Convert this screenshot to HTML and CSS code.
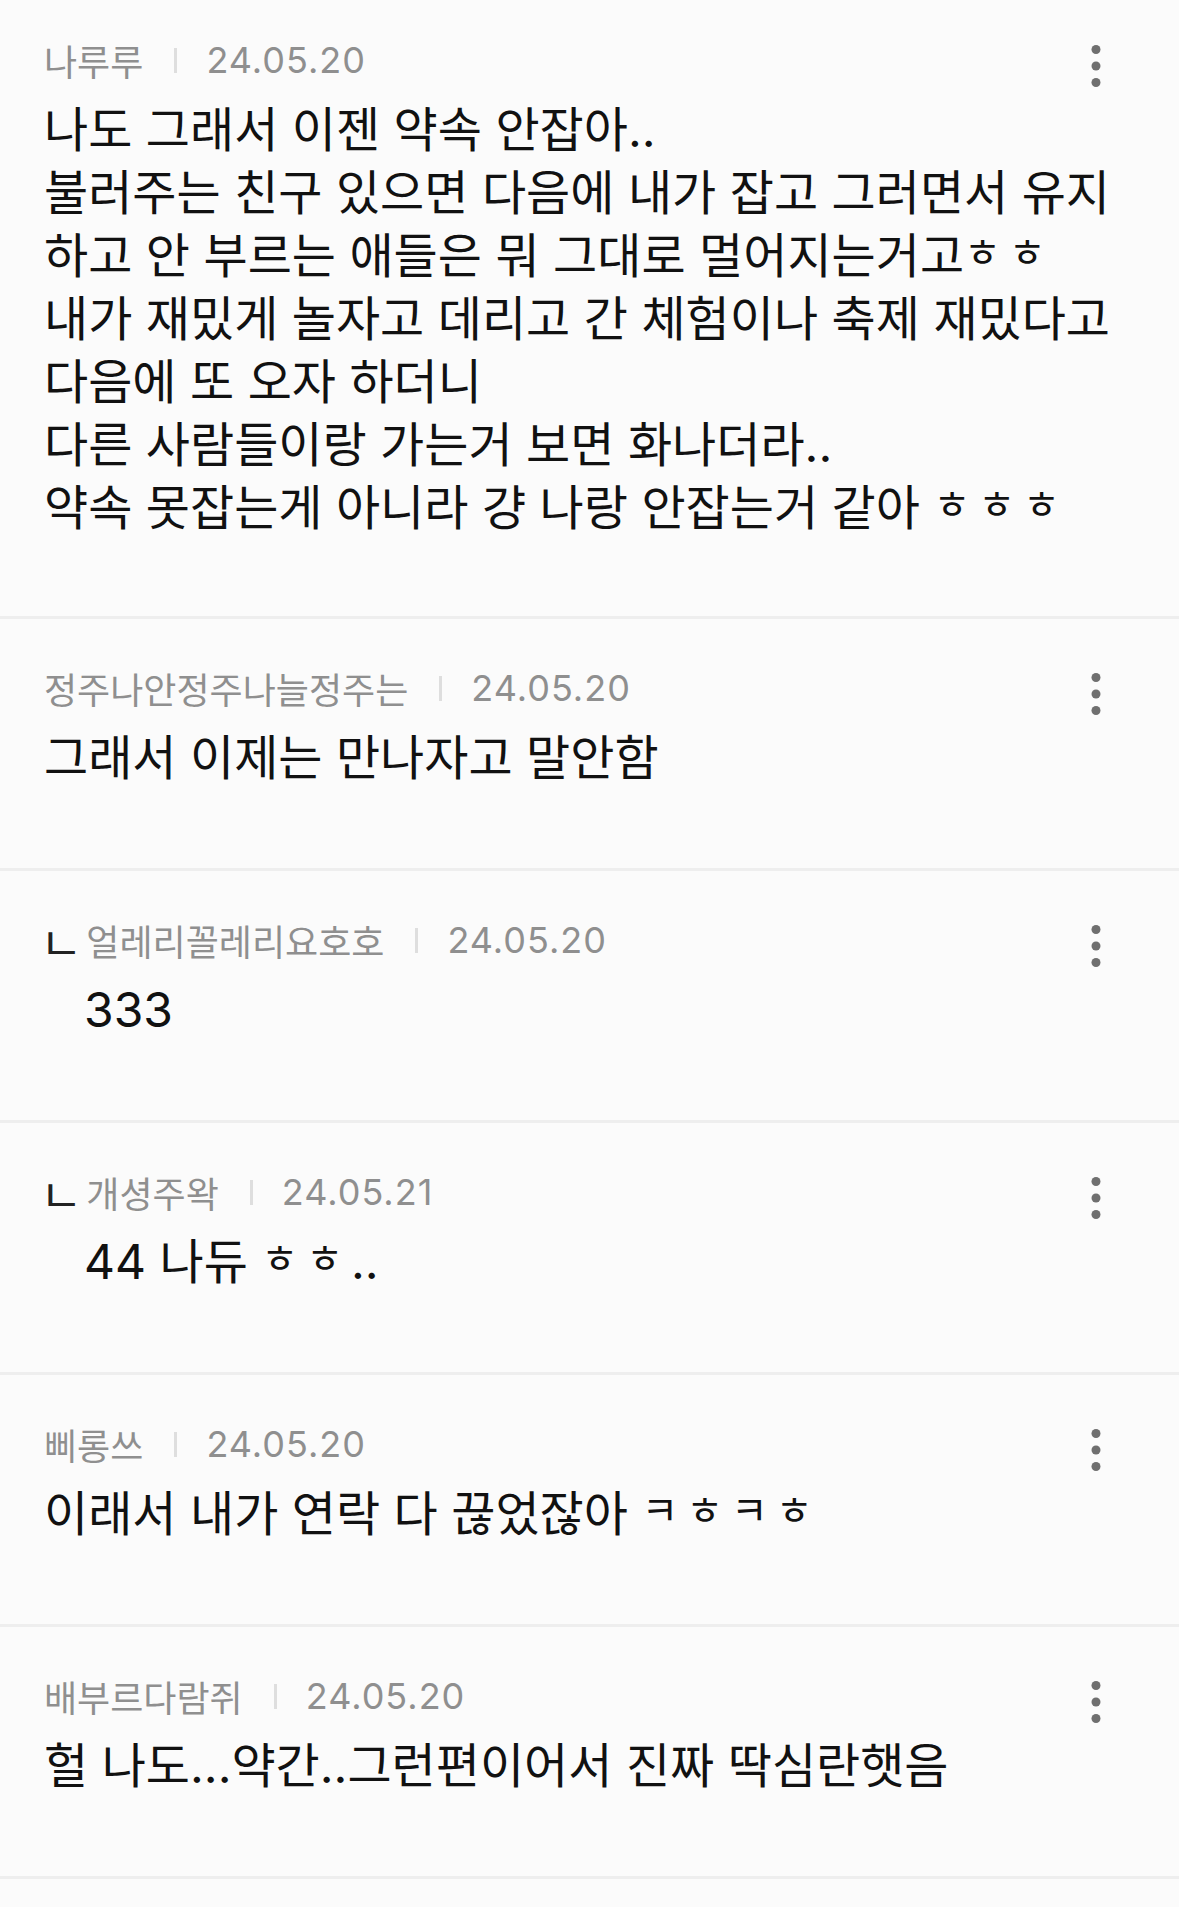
FILE: index.html
```html
<!DOCTYPE html>
<html lang="ko">
<head>
<meta charset="utf-8">
<title>댓글</title>
<link rel="stylesheet" href="styles.css">
</head>
<body>
<div class="list">
  <article class="comment first">
    <div class="meta">
      <span class="name">나루루</span><span class="bar"></span><span class="date">24.05.20</span>
      <svg class="more" viewBox="0 0 10 42" width="10" height="42"><circle cx="5" cy="4.5" r="4.5"/><circle cx="5" cy="21" r="4.5"/><circle cx="5" cy="37.5" r="4.5"/></svg>
    </div>
    <p class="body">나도 그래서 이젠 약속 안잡아..<br>불러주는 친구 있으면 다음에 내가 잡고 그러면서 유지<br>하고 안 부르는 애들은 뭐 그대로 멀어지는거고<span class="jamo">ㅎㅎ</span><br>내가 재밌게 놀자고 데리고 간 체험이나 축제 재밌다고<br>다음에 또 오자 하더니<br>다른 사람들이랑 가는거 보면 화나더라..<br>약속 못잡는게 아니라 걍 나랑 안잡는거 같아 <span class="jamo">ㅎㅎㅎ</span></p>
  </article>
  <article class="comment">
    <div class="meta">
      <span class="name">정주나안정주나늘정주는</span><span class="bar"></span><span class="date">24.05.20</span>
      <svg class="more" viewBox="0 0 10 42" width="10" height="42"><circle cx="5" cy="4.5" r="4.5"/><circle cx="5" cy="21" r="4.5"/><circle cx="5" cy="37.5" r="4.5"/></svg>
    </div>
    <p class="body">그래서 이제는 만나자고 말안함</p>
  </article>
  <article class="comment reply">
    <div class="meta">
      <span class="reply-mark">ㄴ</span><span class="name">얼레리꼴레리요호호</span><span class="bar"></span><span class="date">24.05.20</span>
      <svg class="more" viewBox="0 0 10 42" width="10" height="42"><circle cx="5" cy="4.5" r="4.5"/><circle cx="5" cy="21" r="4.5"/><circle cx="5" cy="37.5" r="4.5"/></svg>
    </div>
    <p class="body">333</p>
  </article>
  <article class="comment reply">
    <div class="meta">
      <span class="reply-mark">ㄴ</span><span class="name">개셩주왁</span><span class="bar"></span><span class="date">24.05.21</span>
      <svg class="more" viewBox="0 0 10 42" width="10" height="42"><circle cx="5" cy="4.5" r="4.5"/><circle cx="5" cy="21" r="4.5"/><circle cx="5" cy="37.5" r="4.5"/></svg>
    </div>
    <p class="body">44 나듀 <span class="jamo">ㅎㅎ</span>..</p>
  </article>
  <article class="comment">
    <div class="meta">
      <span class="name">삐롱쓰</span><span class="bar"></span><span class="date">24.05.20</span>
      <svg class="more" viewBox="0 0 10 42" width="10" height="42"><circle cx="5" cy="4.5" r="4.5"/><circle cx="5" cy="21" r="4.5"/><circle cx="5" cy="37.5" r="4.5"/></svg>
    </div>
    <p class="body">이래서 내가 연락 다 끊었잖아 <span class="jamo">ㅋㅎㅋㅎ</span></p>
  </article>
  <article class="comment">
    <div class="meta">
      <span class="name">배부르다람쥐</span><span class="bar"></span><span class="date">24.05.20</span>
      <svg class="more" viewBox="0 0 10 42" width="10" height="42"><circle cx="5" cy="4.5" r="4.5"/><circle cx="5" cy="21" r="4.5"/><circle cx="5" cy="37.5" r="4.5"/></svg>
    </div>
    <p class="body">헐 나도...약간..그런편이어서 진짜 딱심란햇음</p>
  </article>
  <article class="comment"></article>
</div>
</body>
</html>
```

FILE: styles.css
```css
html, body {
  margin: 0;
  padding: 0;
  background: #fbfbfb;
}

body {
  width: 1179px;
  height: 1907px;
  overflow: hidden;
  font-family: "Noto Sans CJK KR", "Noto Sans", sans-serif;
}

.list {
  display: flex;
  flex-direction: column;
}

.comment {
  padding: 45px 20px 79px 44px;
  border-bottom: 3px solid #eeeeee;
}

.comment.first {
  padding-top: 36px;
  padding-bottom: 77px;
}

.meta {
  display: flex;
  align-items: center;
  height: 48px;
}

.reply-mark {
  font-family: "Noto Sans CJK KR", sans-serif;
  font-size: 46px;
  line-height: 48px;
  color: #222222;
  margin-right: 4px;
  margin-left: -4px;
}

.name {
  font-family: "Noto Sans CJK KR", sans-serif;
  font-size: 36px;
  line-height: 48px;
  color: #8f8f8f;
}

.bar {
  width: 3px;
  height: 25px;
  background: #dedede;
  margin: 0 29px 0 31px;
}

.date {
  font-family: "Inter", "Roboto", sans-serif;
  font-size: 36px;
  line-height: 48px;
  letter-spacing: 1px;
  color: #8f8f8f;
}

.more {
  margin-left: auto;
  margin-right: 58px;
  align-self: flex-start;
  margin-top: 9px;
  margin-bottom: -3px;
  fill: #6f6f6f;
}

.body {
  margin: 14px 0 0;
  font-family: "Inter", "Noto Sans CJK KR", sans-serif;
  font-size: 48px;
  line-height: 63px;
  color: #111111;
  white-space: nowrap;
}

.reply .body {
  padding-left: 40px;
}

.jamo {
  font-family: "Noto Sans CJK KR", sans-serif;
  font-size: 40px;
  line-height: 1;
  letter-spacing: 8px;
  vertical-align: 6px;
}
```
